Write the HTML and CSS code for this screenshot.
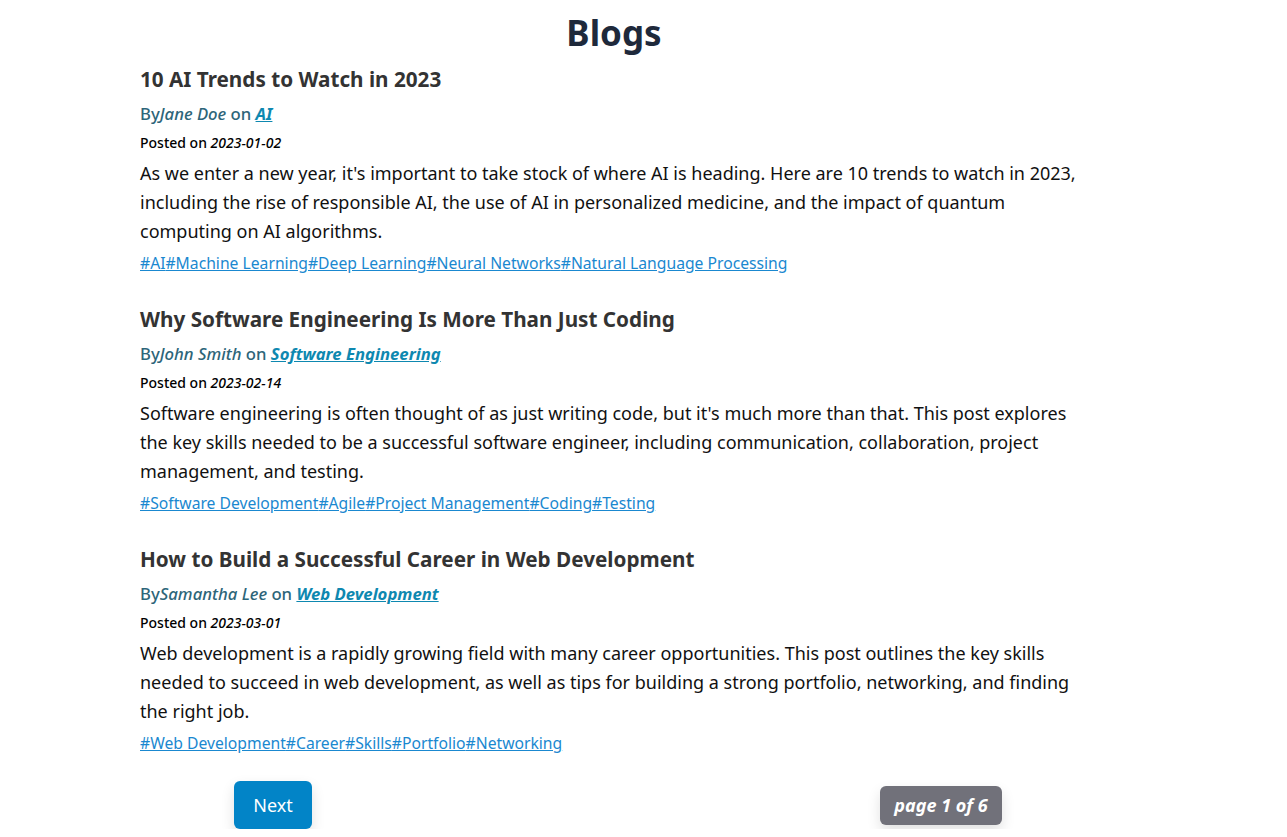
FILE: index.html
```html
<!DOCTYPE html>
<html lang="en">
<head>
<meta charset="utf-8">
<title>Blogs</title>
<link rel="stylesheet" href="styles.css">
</head>
<body>
<main class="page">
  <h1 class="page-title">Blogs</h1>

  <article class="post">
    <h2 class="post-title">10 AI Trends to Watch in 2023</h2>
    <p class="post-by">By<em>Jane Doe</em> on <a class="post-cat" href="#">AI</a></p>
    <p class="post-date">Posted on <em>2023-01-02</em></p>
    <p class="post-body">As we enter a new year, it's important to take stock of where AI is heading. Here are 10 trends to watch in 2023, including the rise of responsible AI, the use of AI in personalized medicine, and the impact of quantum computing on AI algorithms.</p>
    <p class="post-tags"><a href="#">#AI</a><a href="#">#Machine Learning</a><a href="#">#Deep Learning</a><a href="#">#Neural Networks</a><a href="#">#Natural Language Processing</a></p>
  </article>

  <article class="post">
    <h2 class="post-title">Why Software Engineering Is More Than Just Coding</h2>
    <p class="post-by">By<em>John Smith</em> on <a class="post-cat" href="#">Software Engineering</a></p>
    <p class="post-date">Posted on <em>2023-02-14</em></p>
    <p class="post-body">Software engineering is often thought of as just writing code, but it's much more than that. This post explores the key skills needed to be a successful software engineer, including communication, collaboration, project management, and testing.</p>
    <p class="post-tags"><a href="#">#Software Development</a><a href="#">#Agile</a><a href="#">#Project Management</a><a href="#">#Coding</a><a href="#">#Testing</a></p>
  </article>

  <article class="post">
    <h2 class="post-title">How to Build a Successful Career in Web Development</h2>
    <p class="post-by">By<em>Samantha Lee</em> on <a class="post-cat" href="#">Web Development</a></p>
    <p class="post-date">Posted on <em>2023-03-01</em></p>
    <p class="post-body">Web development is a rapidly growing field with many career opportunities. This post outlines the key skills needed to succeed in web development, as well as tips for building a strong portfolio, networking, and finding the right job.</p>
    <p class="post-tags"><a href="#">#Web Development</a><a href="#">#Career</a><a href="#">#Skills</a><a href="#">#Portfolio</a><a href="#">#Networking</a></p>
  </article>

  <nav class="pager">
    <button class="pager-next" type="button">Next</button>
    <span class="pager-label">page 1 of 6</span>
  </nav>
</main>
</body>
</html>
```

FILE: styles.css
```css
html, body {
  margin: 0;
  padding: 0;
  background: #ffffff;
}

body {
  font-family: "Noto Sans", "Open Sans", sans-serif;
  color: #111111;
}

.page {
  width: 948px;
  margin: 0 0 0 140px;
  padding-top: 11px;
}

.page-title {
  margin: 0;
  font-size: 35px;
  line-height: 44px;
  font-weight: 700;
  text-align: center;
  color: #1e293b;
}

.post {
  margin-top: 9px;
}

.post + .post {
  margin-top: 29px;
}

.post-title {
  margin: 0;
  font-size: 20.7px;
  line-height: 30px;
  font-weight: 700;
  color: #333333;
}

.post-by {
  margin: 8px 0 0;
  font-size: 16.7px;
  line-height: 24px;
  font-weight: 500;
  color: #2d6579;
}

.post-cat {
  color: #0e88b0;
  font-weight: 700;
  font-style: italic;
  text-decoration: underline;
}

.post-date {
  margin: 7px 0 0;
  font-size: 14px;
  line-height: 20px;
  font-weight: 500;
  color: #000000;
}

.post-body {
  margin: 6px 0 0;
  font-size: 18px;
  line-height: 29px;
  color: #111111;
}

.post-tags {
  margin: 5px 0 0;
  font-size: 15.7px;
  line-height: 24px;
}

.post-tags a {
  color: #1a88d0;
  text-decoration: underline;
}

.pager {
  display: flex;
  justify-content: space-between;
  align-items: center;
  margin-top: 26px;
  padding: 0 86px 0 94px;
}

.pager-next {
  width: 78px;
  height: 48px;
  border: none;
  border-radius: 6px;
  background: #0284c7;
  color: #ffffff;
  font-family: inherit;
  font-size: 18px;
  box-shadow: 0 6px 14px rgba(0, 0, 0, 0.12);
}

.pager-label {
  box-sizing: border-box;
  width: 122px;
  height: 39px;
  line-height: 39px;
  text-align: center;
  border-radius: 6px;
  background: #71717a;
  color: #ffffff;
  font-size: 18px;
  font-weight: 700;
  font-style: italic;
  box-shadow: 0 6px 14px rgba(0, 0, 0, 0.12);
}
```
